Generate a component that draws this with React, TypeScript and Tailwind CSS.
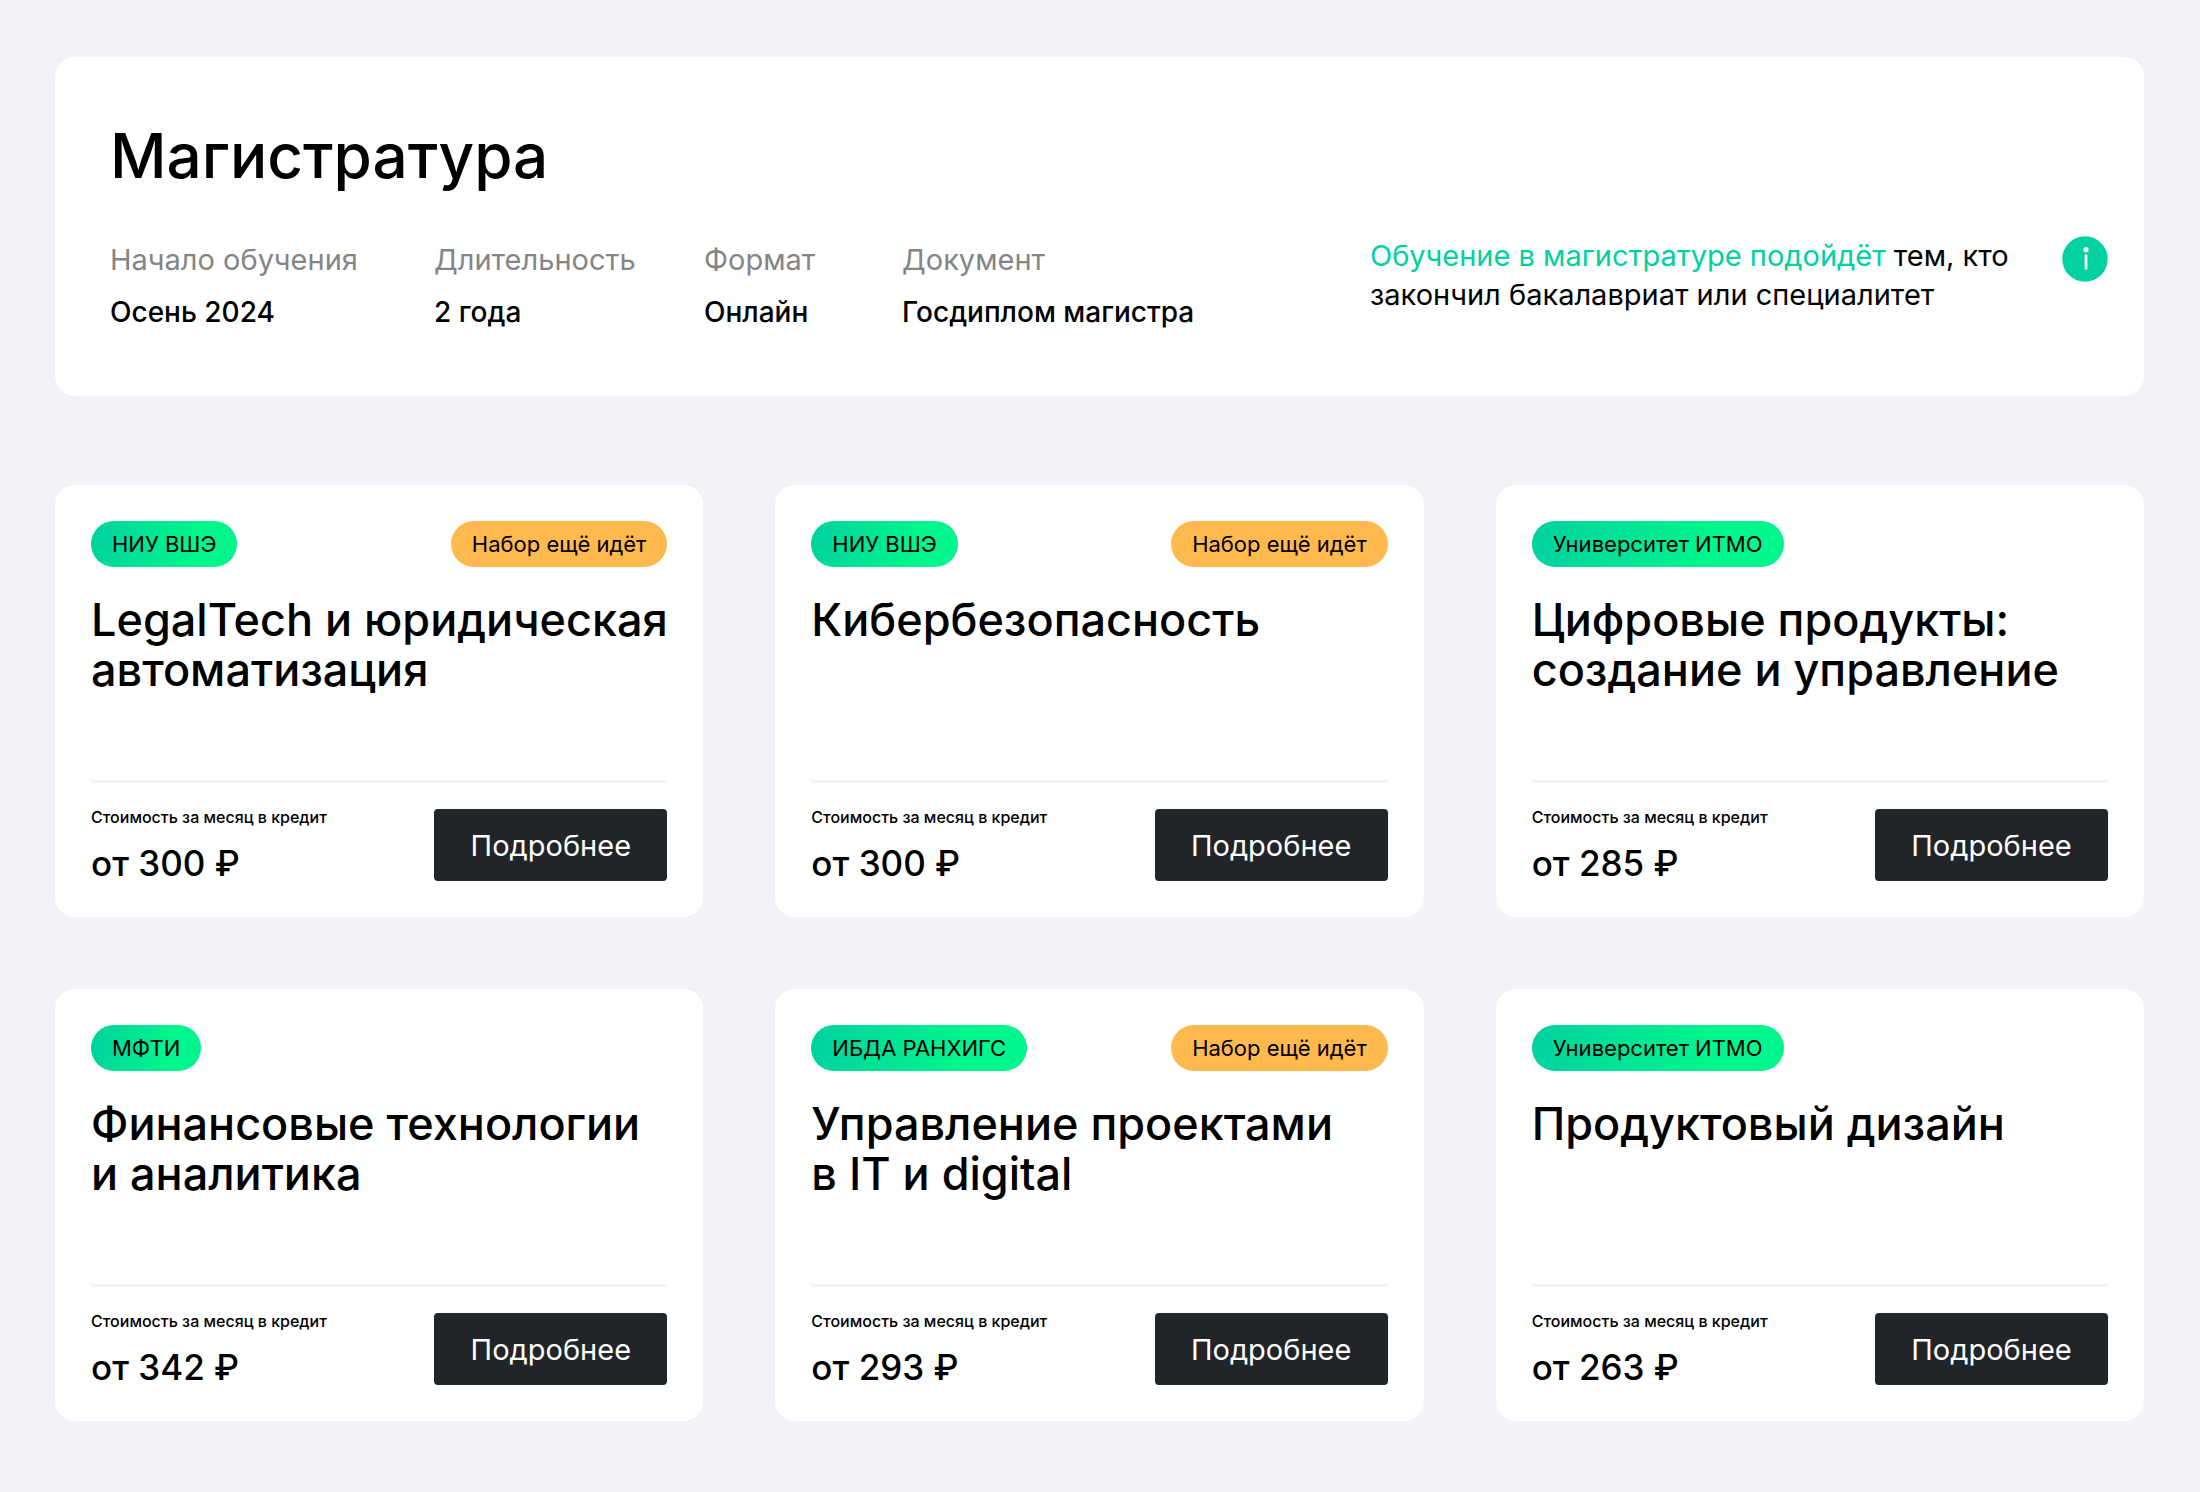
import React from 'react';

interface Program {
  university: string;
  title: string;
  price: number;
  open: boolean;
}

const facts = [
  { label: 'Начало обучения', value: 'Осень 2024' },
  { label: 'Длительность', value: '2 года' },
  { label: 'Формат', value: 'Онлайн' },
  { label: 'Документ', value: 'Госдиплом магистра' },
];

const programs: Program[] = [
  { university: 'НИУ ВШЭ', title: 'LegalTech и юридическая автоматизация', price: 300, open: true },
  { university: 'НИУ ВШЭ', title: 'Кибербезопасность', price: 300, open: true },
  { university: 'Университет ИТМО', title: 'Цифровые продукты: создание и управление', price: 285, open: false },
  { university: 'МФТИ', title: 'Финансовые технологии и\u00a0аналитика', price: 342, open: false },
  { university: 'ИБДА РАНХИГС', title: 'Управление проектами в\u00a0IT и digital', price: 293, open: true },
  { university: 'Университет ИТМО', title: 'Продуктовый дизайн', price: 263, open: false },
];

function InfoIcon() {
  return (
    <svg viewBox="0 0 46 46" className="w-[46px] h-[46px]" aria-hidden="true">
      <circle cx="23" cy="23" r="22.7" fill="#00d1a0" />
      <circle cx="24" cy="13.7" r="2.6" fill="#fff" />
      <rect x="22.6" y="18.5" width="2.8" height="15" rx="0.6" fill="#fff" />
    </svg>
  );
}

function Header() {
  return (
    <header className="bg-white rounded-[20px] pl-[55px] pr-9 pt-[63px] pb-16">
      <h1 className="text-[62px] leading-[72px] font-medium">Магистратура</h1>
      <div className="mt-10 flex items-start justify-between">
        <dl className="mt-2 grid grid-cols-[324px_270px_198px_auto]">
          {facts.map(fact => (
            <div key={fact.label}>
              <dt className="text-[29px] leading-10 text-[#858585]">{fact.label}</dt>
              <dd className="mt-3 text-[28px] leading-10 font-medium">{fact.value}</dd>
            </div>
          ))}
        </dl>
        <div className="w-[738px] flex items-start justify-between">
          <p className="pt-1 text-[29px] leading-[39px]">
            <span className="text-[#00d1a0]">Обучение в магистратуре подойдёт</span> тем, кто
            <br />
            закончил бакалавриат или специалитет
          </p>
          <button type="button" aria-label="Подробнее о поступлении" className="mt-1 rounded-full">
            <InfoIcon />
          </button>
        </div>
      </div>
    </header>
  );
}

function ProgramCard({ program }: { program: Program }) {
  return (
    <article className="bg-white rounded-[20px] p-9 flex flex-col">
      <div className="flex justify-between">
        <span className="h-[46px] px-[21px] rounded-full flex items-center text-[22px] leading-7 bg-[linear-gradient(100deg,#00d1a0,#00f58c_70%)]">
          {program.university}
        </span>
        {program.open && (
          <span className="h-[46px] px-[21px] rounded-full flex items-center text-[22px] leading-7 bg-[#ffb94f]">
            Набор ещё идёт
          </span>
        )}
      </div>
      <h2 className="mt-7 -mr-4 h-[185px] text-[45px] leading-[50px] font-medium">{program.title}</h2>
      <div className="border-t-[3px] border-[#f2f4f7] pt-[26px] flex items-start justify-between">
        <div>
          <p className="text-[16px] leading-4 font-medium">Стоимость за месяц в кредит</p>
          <p className="mt-5 text-[35px] leading-9 font-medium">от {program.price} ₽</p>
        </div>
        <button
          type="button"
          className="h-[72px] w-[233px] pt-0.5 rounded bg-[#212429] text-white text-[29px]"
        >
          Подробнее
        </button>
      </div>
    </article>
  );
}

export default function App() {
  return (
    <main className="min-h-screen bg-[#f2f3f8] text-black font-['Inter',sans-serif] pl-[55px] pr-14 pt-[57px] pb-[71px]">
      <Header />
      <section className="mt-[89px] grid grid-cols-3 gap-[72px]">
        {programs.map((program, i) => (
          <ProgramCard key={i} program={program} />
        ))}
      </section>
    </main>
  );
}
